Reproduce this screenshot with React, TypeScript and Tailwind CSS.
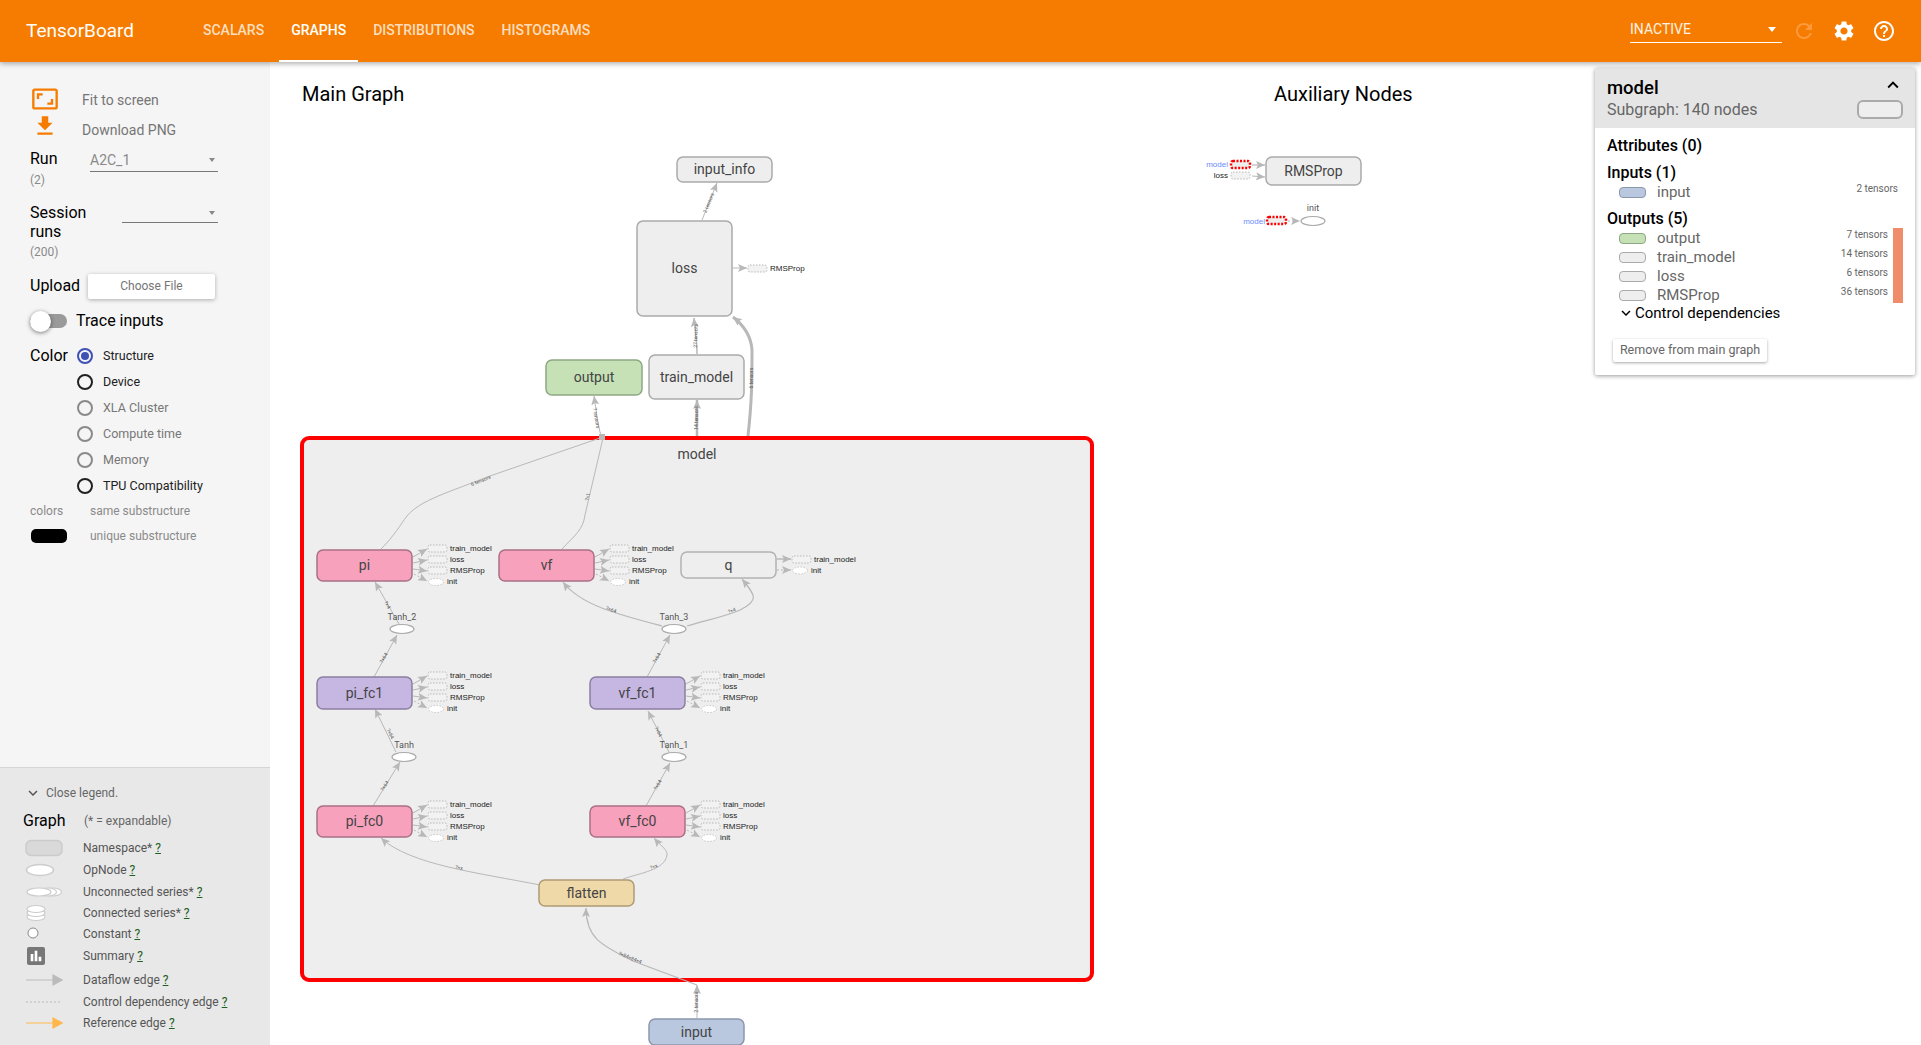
import * as React from "react";
import { MdAspectRatio, MdBarChart, MdExpandLess, MdExpandMore, MdFileDownload, MdHelpOutline, MdRefresh, MdSettings } from "react-icons/md";

const tabs = ["Scalars", "Graphs", "Distributions", "Histograms"];

function Caret({ className = "" }: { className?: string }) {
  return <span className={`w-0 h-0 border-x-[3.5px] border-x-transparent border-t-[4px] border-t-[#888] ${className}`} />;
}

function Header() {
  return (
    <header className="relative z-20 h-[62px] shrink-0 bg-[#f57c00] flex items-center pl-[26px] pr-[25px] shadow-[0_2px_5px_rgba(0,0,0,0.3)] text-white">
      <div className="text-[19px] w-[110px] whitespace-nowrap">TensorBoard</div>
      <nav className="ml-[55px] flex h-full gap-[3px]">
        {tabs.map((t) => (
          <div
            key={t}
            className={`px-3 flex items-center text-[14px] font-medium uppercase border-b-2 ${t === "Graphs" ? "border-white text-white" : "border-transparent text-white/75"}`}
          >
            {t}
          </div>
        ))}
      </nav>
      <div className="ml-auto flex items-center">
        <div className="w-[152px] h-[28px] pt-[2px] border-b border-white flex items-center justify-between text-[14px] text-white/90 pr-[6px] mt-[-5px]">
          <span>INACTIVE</span>
          <span className="w-0 h-0 border-x-[4.5px] border-x-transparent border-t-[5px] border-t-white" />
        </div>
        <MdRefresh className="ml-[10px] text-[#ff9a3c]" size={24} />
        <MdSettings className="ml-[16px]" size={24} />
        <MdHelpOutline className="ml-[16px]" size={24} />
      </div>
    </header>
  );
}

function Radio({ label, state }: { label: string; state: "on" | "dark" | "off" }) {
  const ring = state === "on" ? "border-[#3f51b5]" : state === "dark" ? "border-[#212121]" : "border-[#8a8a8a]";
  return (
    <div className="h-[26px] flex items-center">
      <span className={`w-[16px] h-[16px] rounded-full border-2 flex items-center justify-center ${ring}`}>
        {state === "on" && <span className="w-[8px] h-[8px] rounded-full bg-[#3f51b5]" />}
      </span>
      <span className={`ml-[10px] text-[12.5px] ${state === "off" ? "text-[#777]" : "text-[#212121]"}`}>{label}</span>
    </div>
  );
}

function Controls() {
  return (
    <div className="pt-[23px] pl-[30px] pr-[52px]">
      <div className="h-[30px] flex items-center text-[14px] text-[#757575]">
        <MdAspectRatio className="text-[#f57c00] ml-[1px] w-[28px] h-[28px] mt-[-2px]" />
        <span className="ml-[23px]">Fit to screen</span>
      </div>
      <div className="h-[30px] flex items-center text-[14px] text-[#757575]">
        <MdFileDownload className="text-[#f57c00] ml-[2px] w-[26px] h-[26px] mt-[-8px]" />
        <span className="ml-[24px]">Download PNG</span>
      </div>
      <div className="mt-[2px] h-[24px] flex items-center">
        <span className="text-[16px] w-[60px] text-black">Run</span>
        <div className="flex-1 h-[22px] mt-[3px] border-b border-[#777] flex items-center justify-between pr-[3px] text-[14px] text-[#8a8a8a]">
          <span>A2C_1</span>
          <Caret />
        </div>
      </div>
      <div className="h-[18px] flex items-center text-[12px] text-[#8a8a8a]">(2)</div>
      <div className="mt-[14px] flex">
        <div className="w-[92px] text-[16px] leading-[19px] text-black">
          Session
          <br />
          runs
        </div>
        <div className="flex-1 h-[20px] border-b border-[#777] flex items-center justify-end pr-[3px]">
          <Caret />
        </div>
      </div>
      <div className="h-[22px] flex items-center text-[12px] text-[#8a8a8a]">(200)</div>
      <div className="mt-[10px] h-[26px] flex items-center">
        <span className="text-[16px] w-[58px] text-black">Upload</span>
        <div className="w-[127px] h-[25px] bg-white rounded-[2px] shadow-[0_1px_4px_rgba(0,0,0,0.3)] flex items-center justify-center text-[12px] text-[#757575]">
          Choose File
        </div>
      </div>
      <div className="mt-[10px] h-[24px] flex items-center relative">
        <span className="w-[37px] h-[14px] rounded-full bg-[#9a9a9a]" />
        <span className="absolute left-0 w-[21px] h-[21px] rounded-full bg-white shadow-[0_1px_4px_rgba(0,0,0,0.5)]" />
        <span className="ml-[9px] text-[16px] text-black">Trace inputs</span>
      </div>
      <div className="mt-[10px] flex">
        <span className="w-[47px] h-[26px] flex items-center text-[16px] text-black">Color</span>
        <div>
          <Radio label="Structure" state="on" />
          <Radio label="Device" state="dark" />
          <Radio label="XLA Cluster" state="off" />
          <Radio label="Compute time" state="off" />
          <Radio label="Memory" state="off" />
          <Radio label="TPU Compatibility" state="dark" />
        </div>
      </div>
      <div className="mt-[1px] h-[22px] flex items-center text-[12px] text-[#8a8a8a]">
        <span className="w-[60px]">colors</span>
        <span className="whitespace-nowrap">same substructure</span>
      </div>
      <div className="mt-[3px] h-[22px] flex items-center text-[12px] text-[#8a8a8a]">
        <span className="w-[36px] h-[14px] ml-[1px] rounded-[5px] bg-black" />
        <span className="ml-[23px] whitespace-nowrap">unique substructure</span>
      </div>
    </div>
  );
}

function LegendIcon({ kind }: { kind: string }) {
  if (kind === "summary") {
    return (
      <span className="ml-[2px] w-[18px] h-[18px] rounded-[2px] bg-[#777] flex items-center justify-center text-white">
        <MdBarChart size={16} />
      </span>
    );
  }
  return (
    <svg width="38" height="18" viewBox="0 0 38 18">
      {kind === "namespace" && <rect x="1" y="1.5" width="36" height="15" rx="5" fill="#d9d9d9" stroke="#ccc" strokeWidth="1.5" />}
      {kind === "op" && <ellipse cx="15" cy="9" rx="13.5" ry="5.5" fill="#fff" stroke="#ccc" strokeWidth="1.5" />}
      {kind === "series" && (
        <g fill="#fff" stroke="#ccc" strokeWidth="1.2">
          <ellipse cx="28" cy="9" rx="8.5" ry="4" />
          <ellipse cx="23" cy="9" rx="8.5" ry="4" />
          <ellipse cx="14" cy="9" rx="12" ry="4" />
        </g>
      )}
      {kind === "connected" && (
        <g fill="#fff" stroke="#ccc" strokeWidth="1.2">
          <ellipse cx="11" cy="13" rx="9" ry="3.5" />
          <ellipse cx="11" cy="9" rx="9" ry="3.5" />
          <ellipse cx="11" cy="5" rx="9" ry="3.5" />
        </g>
      )}
      {kind === "constant" && <circle cx="8" cy="8" r="5" fill="#fff" stroke="#888" strokeWidth="1" />}
      {kind === "dataflow" && <path d="M1 9H30M28 4L37 9L28 14Z" fill="#bbb" stroke="#bbb" strokeWidth="1.2" />}
      {kind === "control" && <path d="M1 9H37" stroke="#bbb" strokeWidth="1" strokeDasharray="2 2" />}
      {kind === "reference" && <path d="M1 9H30M28 4L37 9L28 14Z" fill="#ffb74d" stroke="#ffb74d" strokeWidth="1.2" />}
    </svg>
  );
}

const legendRows = [
  { kind: "namespace", label: "Namespace*", h: "h-[22px]" },
  { kind: "op", label: "OpNode", h: "h-[22px]" },
  { kind: "series", label: "Unconnected series*", h: "h-[21px]" },
  { kind: "connected", label: "Connected series*", h: "h-[21px]" },
  { kind: "constant", label: "Constant", h: "h-[21px]" },
  { kind: "summary", label: "Summary", h: "h-[24px]" },
  { kind: "dataflow", label: "Dataflow edge", h: "h-[24px]" },
  { kind: "control", label: "Control dependency edge", h: "h-[20px]" },
  { kind: "reference", label: "Reference edge", h: "h-[22px]" },
];

function Legend() {
  return (
    <div className="h-[278px] shrink-0 bg-[#e8e8e8] border-t border-[#d5d5d5] pt-[15px] pl-[25px]">
      <div className="h-[20px] flex items-center text-[12px] text-[#666]">
        <MdExpandMore size={18} className="ml-[-1px] text-[#555]" />
        <span className="ml-[4px]">Close legend.</span>
      </div>
      <div className="mt-[6px] h-[24px] flex items-center ml-[-2px]">
        <span className="text-[16px] text-black w-[61px]">Graph</span>
        <span className="text-[12px] text-[#666]">(* = expandable)</span>
      </div>
      <div className="mt-[4px]">
        {legendRows.map((r) => (
          <div key={r.kind} className={`${r.h} flex items-center`}>
            <span className="w-[58px] flex items-center">
              <LegendIcon kind={r.kind} />
            </span>
            <span className="text-[12px] text-[#555] whitespace-nowrap">
              {r.label} <span className="underline text-[#1b5e20]">?</span>
            </span>
          </div>
        ))}
      </div>
    </div>
  );
}

function Node({ x, y, w, h, label, fill = "#eee", stroke = "#aaa", r = 6 }: { x: number; y: number; w: number; h: number; label: string; fill?: string; stroke?: string; r?: number }) {
  return (
    <g>
      <rect x={x} y={y} width={w} height={h} rx={r} fill={fill} stroke={stroke} strokeWidth="1.5" />
      <text x={x + w / 2} y={y + h / 2 + 4.5} textAnchor="middle" fontSize="14" fill="#444">
        {label}
      </text>
    </g>
  );
}

function Edge({ d, w = 1, dash }: { d: string; w?: number; dash?: string }) {
  return <path d={d} fill="none" stroke="#b8b8b8" strokeWidth={w} strokeDasharray={dash} markerEnd="url(#arrow)" />;
}

function EdgeLabel({ x, y, a, t }: { x: number; y: number; a: number; t: string }) {
  return (
    <text x={x} y={y} transform={`rotate(${a} ${x} ${y})`} textAnchor="middle" fontSize="5" fill="#555" dominantBaseline="middle">
      {t}
    </text>
  );
}

function Op({ x, y, label, lx = x }: { x: number; y: number; label: string; lx?: number }) {
  return (
    <g>
      <text x={lx} y={y - 9} textAnchor="middle" fontSize="9" fill="#555">
        {label}
      </text>
      <ellipse cx={x} cy={y} rx="12" ry="4.5" fill="#fff" stroke="#aaa" strokeWidth="1.2" />
    </g>
  );
}

function SmallText({ x, y, t, anchor = "start", fill = "#222" }: { x: number; y: number; t: string; anchor?: "start" | "end"; fill?: string }) {
  return (
    <text x={x} y={y} fontSize="8" fill={fill} textAnchor={anchor} dominantBaseline="middle" fontFamily="Liberation Sans, sans-serif">
      {t}
    </text>
  );
}

function Stub({ x, y, red = false }: { x: number; y: number; red?: boolean }) {
  return <rect x={x} y={y} width="19" height="7" rx="2" fill={red ? "#eee" : "#f2f2f2"} stroke={red ? "#f00" : "#aaa"} strokeWidth={red ? 2.5 : 0.8} strokeDasharray={red ? "2 1.5" : "1.5 1.5"} />;
}

// train_model / loss / RMSProp / init stubs hanging off the right edge of a node
function Outs({ x, y }: { x: number; y: number }) {
  return (
    <g>
      <Edge d={`M${x + 1} ${y + 7}L${x + 15} ${y - 1}`} />
      <Edge d={`M${x + 1} ${y + 13}L${x + 15} ${y + 10}`} />
      <Edge d={`M${x + 1} ${y + 19}L${x + 15} ${y + 21}`} />
      <Edge d={`M${x + 2} ${y + 24}L${x + 15} ${y + 31}`} dash="2 2" />
      <Stub x={x + 16} y={y - 5} />
      <Stub x={x + 16} y={y + 6} />
      <Stub x={x + 16} y={y + 17} />
      <ellipse cx={x + 24} cy={y + 32} rx="7.5" ry="3.5" fill="#fff" stroke="#bbb" strokeWidth="0.8" strokeDasharray="1.5 1.5" />
      <SmallText x={x + 38} y={y - 1.5} t="train_model" />
      <SmallText x={x + 38} y={y + 9.5} t="loss" />
      <SmallText x={x + 38} y={y + 20.5} t="RMSProp" />
      <SmallText x={x + 35} y={y + 32} t="init" />
    </g>
  );
}

function GraphCanvas() {
  return (
    <svg className="absolute inset-0 w-full h-full" viewBox="270 62 1651 983" preserveAspectRatio="xMinYMin slice">
      <defs>
        <marker id="arrow" markerUnits="userSpaceOnUse" markerWidth="10" markerHeight="10" refX="9" refY="4" orient="auto">
          <path d="M0 0L9 4L0 8L2 4Z" fill="#b8b8b8" />
        </marker>
      </defs>

      <Edge d="M702 220L717 183" />
      <EdgeLabel x={709} y={203} a={-68} t="2 tensors" />
      <Edge d="M697 354C697 340 695 330 694 318" w={1.5} />
      <EdgeLabel x={696} y={336} a={-88} t="27 tensors" />
      <Edge d="M697 438V400" w={2.5} />
      <EdgeLabel x={697} y={418} a={-90} t="14 tensors" />
      <Edge d="M748 436C752 400 752 380 752 350C751 335 742 324 733 317" w={3} />
      <EdgeLabel x={752} y={378} a={-90} t="6 tensors" />
      <Edge d="M601 436C598 425 596 410 594 396" />
      <EdgeLabel x={596} y={418} a={80} t="7 tensors" />

      <Node x={677} y={157} w={95} h={25} label="input_info" />
      <Node x={637} y={221} w={95} h={95} label="loss" />
      <Node x={546} y={360} w={96} h={35} label="output" fill="#c5e1b5" stroke="#8fa884" />
      <Node x={649} y={355} w={95} h={44} label="train_model" />
      <Edge d="M733 268H747" />
      <Stub x={748} y={265} />
      <SmallText x={770} y={268.5} t="RMSProp" />

      <rect x="302" y="438" width="790" height="542" rx="7" fill="#eee" stroke="#f00" strokeWidth="4" />
      <text x="697" y="459" textAnchor="middle" fontSize="14" fill="#444">
        model
      </text>
      <rect x="599" y="434" width="6" height="6" fill="#b8b8b8" />
      <Edge d="M697 1018V985" />
      <EdgeLabel x={697} y={1002} a={-90} t="2 tensors" />

      <path d="M381 549C395 535 400 525 407 516C420 500 450 492 487 477L600 438" fill="none" stroke="#b8b8b8" strokeWidth="1" />
      <EdgeLabel x={481} y={481} a={-22} t="6 tensors" />
      <path d="M562 549C575 535 583 530 585 515L603 438" fill="none" stroke="#b8b8b8" strokeWidth="1" />
      <EdgeLabel x={588} y={497} a={-78} t="?×1" />

      <Edge d="M399 624L375 582" />
      <EdgeLabel x={387} y={605} a={60} t="?×4" />
      <Edge d="M374 677L397 635" />
      <EdgeLabel x={384} y={658} a={-60} t="?×64" />
      <Edge d="M396 752L375 709" />
      <EdgeLabel x={390} y={734} a={63} t="?×64" />
      <Edge d="M373 806L400 762" />
      <EdgeLabel x={385} y={786} a={-58} t="?×64" />
      <Edge d="M540 885C480 873 410 865 381 838" />
      <EdgeLabel x={459} y={868} a={12} t="?×x" />
      <Edge d="M623 879C640 873 665 870 667 855C668 850 660 845 654 838" />
      <EdgeLabel x={654} y={867} a={-18} t="?×x" />
      <Edge d="M697 985L633 961C600 945 586 937 586 908" w={1.2} />
      <EdgeLabel x={630} y={958} a={22} t="?×84×84×4" />
      <Edge d="M647 677L670 635" />
      <EdgeLabel x={657} y={658} a={-60} t="?×64" />
      <Edge d="M662 626C620 615 580 605 563 582" w={1.2} />
      <EdgeLabel x={611} y={610} a={20} t="?×64" />
      <Edge d="M687 626C705 620 725 617 740 610C760 600 755 595 742 579" w={1.2} />
      <EdgeLabel x={732} y={611} a={-20} t="?×4" />
      <Edge d="M669 752L648 711" />
      <EdgeLabel x={658} y={732} a={63} t="?×64" />
      <Edge d="M646 806L670 763" />
      <EdgeLabel x={658} y={785} a={-60} t="?×64" />

      <Node x={317} y={550} w={95} h={31} label="pi" fill="#f7a1bd" stroke="#a97086" />
      <Node x={499} y={550} w={95} h={31} label="vf" fill="#f7a1bd" stroke="#a97086" />
      <Node x={681} y={552} w={95} h={26} label="q" stroke="#b2b2b2" />
      <Node x={317} y={677} w={95} h={32} label="pi_fc1" fill="#c5b7e2" stroke="#8c7fa0" />
      <Node x={590} y={677} w={95} h={32} label="vf_fc1" fill="#c5b7e2" stroke="#8c7fa0" />
      <Node x={317} y={806} w={95} h={31} label="pi_fc0" fill="#f7a1bd" stroke="#a97086" />
      <Node x={590} y={806} w={95} h={31} label="vf_fc0" fill="#f7a1bd" stroke="#a97086" />
      <Node x={539} y={880} w={95} h={26} label="flatten" fill="#f0d9a8" stroke="#ae9b74" />
      <Node x={649} y={1019} w={95} h={26} label="input" fill="#b9c7df" stroke="#8d97ac" />

      <Op x={402} y={629} label="Tanh_2" />
      <Op x={674} y={629} label="Tanh_3" />
      <Op x={404} y={757} label="Tanh" />
      <Op x={674} y={757} label="Tanh_1" />

      <Outs x={412} y={550} />
      <Outs x={594} y={550} />
      <Outs x={412} y={677} />
      <Outs x={685} y={677} />
      <Outs x={412} y={806} />
      <Outs x={685} y={806} />

      <Edge d="M777 559H791" w={1.5} />
      <Stub x={792} y={556} />
      <SmallText x={814} y={559.5} t="train_model" />
      <Edge d="M777 570H791" dash="2 2" />
      <ellipse cx="800" cy="570.5" rx="7.5" ry="3.5" fill="#fff" stroke="#bbb" strokeWidth="0.8" strokeDasharray="1.5 1.5" />
      <SmallText x={811} y={570.5} t="init" />

      <SmallText x={1228} y={165} t="model" anchor="end" fill="#6b8cff" />
      <SmallText x={1228} y={176} t="loss" anchor="end" />
      <Stub x={1231} y={161} red />
      <Stub x={1231} y={172} />
      <Edge d="M1252 165H1265" w={1.2} />
      <Edge d="M1252 176L1265 177" w={1.2} />
      <Node x={1266} y={157} w={95} h={28} label="RMSProp" />
      <text x="1313" y="211" textAnchor="middle" fontSize="9" fill="#555">
        init
      </text>
      <ellipse cx="1313" cy="221" rx="12" ry="4.5" fill="#fff" stroke="#aaa" strokeWidth="1.2" />
      <SmallText x={1265} y={222} t="model" anchor="end" fill="#6b8cff" />
      <Stub x={1267} y={217} red />
      <Edge d="M1288 221H1300" dash="2 2" />
    </svg>
  );
}

function Pill({ fill, stroke }: { fill: string; stroke: string }) {
  return <span className="w-[27px] h-[11px] rounded-[4px] border-[1.5px]" style={{ backgroundColor: fill, borderColor: stroke }} />;
}

const outputs = [
  { name: "output", fill: "#c5e1b5", stroke: "#8fa884", tensors: "7 tensors" },
  { name: "train_model", fill: "#eee", stroke: "#aaa", tensors: "14 tensors" },
  { name: "loss", fill: "#eee", stroke: "#aaa", tensors: "6 tensors" },
  { name: "RMSProp", fill: "#eee", stroke: "#aaa", tensors: "36 tensors" },
];

function InfoCard() {
  return (
    <aside className="absolute z-10 top-[6px] right-[6px] w-[320px] h-[307px] bg-white shadow-[0_1px_4px_rgba(0,0,0,0.4)] rounded-[2px] flex flex-col">
      <div className="h-[60px] bg-[#e5e5e5] pl-[12px] pr-[13px] pt-[9px] relative">
        <div className="text-[18.5px] leading-[22px] font-medium text-black">model</div>
        <div className="text-[16px] leading-[22px] text-[#666]">Subgraph: 140 nodes</div>
        <MdExpandLess size={22} className="absolute right-[11px] top-[6px] text-black" />
        <span className="absolute right-[12px] top-[32px] w-[46px] h-[19px] rounded-[6px] bg-[#eee] border-2 border-[#aaa]" />
      </div>
      <div className="pl-[12px] pt-[7px] text-[16px] font-medium text-black">
        <div className="h-[22px] flex items-center">Attributes (0)</div>
        <div className="mt-[5px] h-[22px] flex items-center">Inputs (1)</div>
        <div className="h-[19px] mt-[-1px] flex items-center pl-[12px] relative font-normal">
          <Pill fill="#b9c7df" stroke="#8d97ac" />
          <span className="ml-[11px] text-[15px] text-[#666]">input</span>
          <span className="absolute right-[17px] top-[-2px] text-[10px] text-[#666]">2 tensors</span>
        </div>
        <div className="mt-[6px] h-[22px] flex items-center">Outputs (5)</div>
        <div className="flex pr-[12px] relative mt-[-1px]">
          <div className="flex-1">
            {outputs.map((o) => (
              <div key={o.name} className="h-[19px] flex items-center pl-[12px] relative font-normal">
                <Pill fill={o.fill} stroke={o.stroke} />
                <span className="ml-[11px] text-[15px] text-[#666]">{o.name}</span>
                <span className="absolute right-[5px] top-[-2px] text-[10px] text-[#666]">{o.tensors}</span>
              </div>
            ))}
          </div>
          <span className="w-[10px] h-[75px] mt-[-1px] bg-[#ef8d6a]" />
        </div>
        <div className="h-[18px] mt-[-1px] flex items-center pl-[10px] font-normal text-[15px]">
          <MdExpandMore size={18} />
          <span>Control dependencies</span>
        </div>
      </div>
      <div className="ml-[18px] mt-[17px] w-[154px] h-[23px] bg-white rounded-[2px] shadow-[0_1px_3px_rgba(0,0,0,0.35)] flex items-center justify-center text-[12.5px] text-[#666]">
        Remove from main graph
      </div>
    </aside>
  );
}

export default function App() {
  return (
    <div className="h-screen w-full flex flex-col overflow-hidden bg-white font-['Roboto',sans-serif]">
      <Header />
      <div className="flex-1 flex min-h-0">
        <div className="relative z-10 w-[270px] shrink-0 bg-[#f5f5f5] flex flex-col justify-between">
          <Controls />
          <Legend />
        </div>
        <main className="relative flex-1 min-w-0">
          <GraphCanvas />
          <div className="relative flex pt-[18px] pl-[32px] text-[20px] leading-[28px] text-black">
            <span className="w-[972px]">Main Graph</span>
            <span>Auxiliary Nodes</span>
          </div>
          <InfoCard />
        </main>
      </div>
    </div>
  );
}
